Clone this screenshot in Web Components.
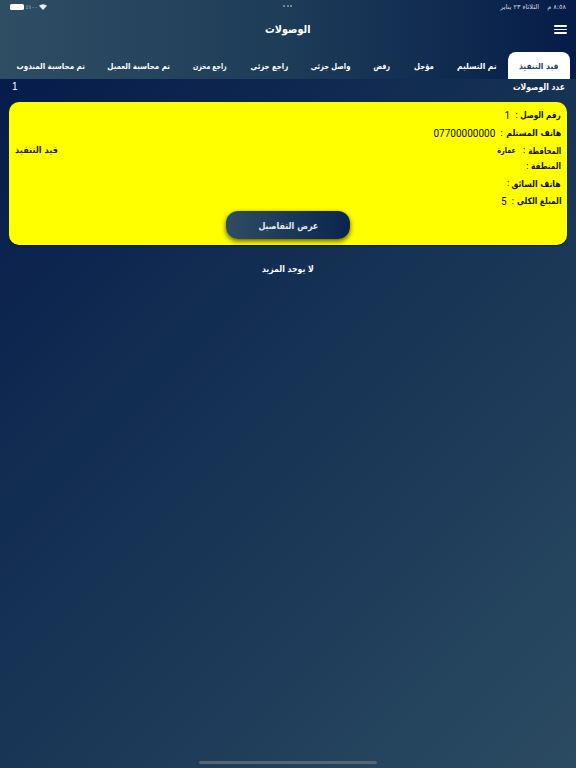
<!DOCTYPE html>
<html lang="ar" dir="rtl"><head><meta charset="utf-8">
<style>
html,body{margin:0;padding:0;height:100%}
body{width:576px;height:768px;overflow:hidden;font-family:"DejaVu Sans",sans-serif;background:linear-gradient(135deg,#04194a 0%,#183555 55%,#2b4b62 100%);color:#fff}
</style></head><body>
<app-header title="الوصولات"></app-header>
<tab-bar active="قيد التنفيذ" items="قيد التنفيذ:.91|تم التسليم:.91|مؤجل:.83|رفض:.77|واصل جزئي:.81|راجع جزئي:.84|راجع مخزن:.74|تم محاسبة العميل:.855|تم محاسبة المندوب:.86"></tab-bar>
<count-row label="عدد الوصولات" value="1"></count-row>
<receipt-card>
  <receipt-line slot="lines" label="رقم الوصل" value="1" gap="0" fit=".83"></receipt-line>
  <receipt-line slot="lines" label="هاتف المستلم" value="07700000000" gap="3" fit=".895"></receipt-line>
  <receipt-line slot="lines" label="المحافظة" value="عمارة" word gap="2.5" fit=".79"></receipt-line>
  <receipt-line slot="lines" label="المنطقة" value="" gap="0.5" fit=".83"></receipt-line>
  <receipt-line slot="lines" label="هاتف السائق" value="" gap="2.5" fit=".875"></receipt-line>
  <receipt-line slot="lines" label="المبلغ الكلي" value="5" gap="2.5" fit=".85"></receipt-line>
  <fit-text slot="status" scale=".91">قيد التنفيذ</fit-text>
  <fit-text slot="action" scale=".87">عرض التفاصيل</fit-text>
</receipt-card>
<end-note><fit-text scale=".9">لا يوجد المزيد</fit-text></end-note>
<home-indicator></home-indicator>
<script>
function def(name,css,html,init){customElements.define(name,class extends HTMLElement{connectedCallback(){if(this.shadowRoot)return;const r=this.attachShadow({mode:'open'});r.innerHTML='<style>'+css+'</style>'+(typeof html==='function'?html(this):html);if(init)init(this);}});}
const band='linear-gradient(90deg,#2f4d63 0%,#1d3c58 50%,#051c48 100%)';
def('app-header',`
:host{display:block;height:52px;background:${band};box-sizing:border-box}
.st{display:flex;justify-content:space-between;align-items:center;height:13px;padding:0 10px;font-size:6.5px;color:#d5dce4;position:relative}
.l{display:flex;align-items:center;gap:1.5px}
.pct{font-size:5.5px}
.dots{position:absolute;left:283px;top:5px;display:flex;gap:1.5px}
.dots i{width:2px;height:2px;border-radius:50%;background:#8a9bb0}
.bar{display:flex;align-items:center;justify-content:center;height:33px;position:relative}
h1{margin:0;font-size:11px;font-weight:700;color:#fff;line-height:1}
.menu{position:absolute;right:9.5px;top:12px;width:13px;height:9px;display:flex;flex-direction:column;justify-content:space-between}
.menu i{display:block;height:1.7px;background:#fff;border-radius:1px}
`,h=>`<div class="st"><span>٨:٥٨ م &nbsp;&nbsp; الثلاثاء ٢٣ يناير</span>
<span class="dots"><i></i><i></i><i></i></span>
<span class="l" dir="ltr"><svg width="14" height="6" viewBox="0 0 14 6"><rect width="14" height="6" rx="1.6" fill="#fff"/></svg><span class="pct">٪١٠٠</span><svg width="8" height="6" viewBox="0 0 8 6"><path d="M4 6 L0 1.8 A5.8 5.8 0 0 1 8 1.8Z" fill="#e8edf2"/></svg></span></div>
<div class="bar"><h1><fit-text scale=".88">${h.getAttribute('title')}</fit-text></h1><div class="menu"><i></i><i></i><i></i></div></div>`);
def('tab-bar',`
:host{display:block;height:27px;background:${band}}
.r{display:flex;height:27px;padding:0 6px;box-sizing:border-box;white-space:nowrap}
.t{padding:0 11.5px;display:flex;align-items:center;font-size:8.3px;font-weight:700;color:#fff}
.t.a{background:#fff;color:#27425c;border-radius:8px 8px 0 0}
`,h=>{const a=h.getAttribute('active');return '<div class="r">'+h.getAttribute('items').split('|').map(x=>{const [t,s]=x.split(':');return `<div class="t${t===a?' a':''}"><fit-text scale="${s}">${t}</fit-text></div>`}).join('')+'</div>'});
def('count-row',`
:host{display:flex;justify-content:space-between;align-items:center;height:15px;padding:0 11px 0 12px;font-size:8.8px;font-weight:700;color:#fff}
.v{font-family:"Liberation Sans",sans-serif;font-size:10px;font-weight:400}
`,h=>`<fit-text scale=".87">${h.getAttribute('label')}</fit-text><span class="v">${h.getAttribute('value')}</span>`);
def('receipt-card',`
:host{display:block;position:relative;margin:8px 9px 0;height:142.5px;box-sizing:border-box;background:#ff0;border-radius:10px;padding:5.5px 6px 0 6px;color:#000;box-shadow:0 1px 1px rgba(0,0,0,.6)}
.lines{display:flex;flex-direction:column}
.st{position:absolute;left:6px;top:42px;font-size:9px;font-weight:700;color:#222}
.btn{position:absolute;left:217px;top:109px;width:124px;height:28px;border-radius:12px;background:linear-gradient(90deg,#2f4d63,#0a2450);color:#e3eaf0;display:flex;align-items:center;justify-content:center;font-size:9.2px;font-weight:700;box-shadow:0 2px 5px rgba(0,0,0,.65)}
`,`<div class="lines"><slot name="lines"></slot></div><div class="st"><slot name="status"></slot></div><div class="btn"><slot name="action"></slot></div>`);
def('receipt-line',`
:host{display:flex;align-items:center;height:15px;font-size:8.8px;font-weight:700;color:#111;white-space:nowrap}
.c{margin:0 2.5px;font-size:8px;font-weight:400}
.v{font-family:"Roboto","Liberation Sans",sans-serif;font-weight:400;font-size:10px;margin-right:2.5px}
.w{font-family:"DejaVu Sans",sans-serif;font-weight:700;font-size:8px;margin-right:4px}
`,h=>`<fit-text scale="${h.getAttribute('fit')}">${h.getAttribute('label')}</fit-text><span class="c">:</span><span class="v${h.hasAttribute('word')?' w':''}">${h.hasAttribute('word')?`<fit-text scale=".8">${h.getAttribute('value')}</fit-text>`:h.getAttribute('value')}</span>`,h=>{h.style.marginTop=h.getAttribute('gap')+'px'});
def('end-note',`:host{display:block;text-align:center;margin-top:19px;font-size:8.6px;font-weight:700;color:#fff}`,'<slot></slot>');
def('home-indicator',`:host{display:block;position:absolute;left:199px;top:761px;width:178px;height:3px;background:#566473;border-radius:2px}`,'');
def('fit-text',`
:host{display:inline-flex;justify-content:center;vertical-align:middle}
span{display:inline-block;flex:none;white-space:nowrap;transform-origin:center}
`,'<span><slot></slot></span>',h=>{const s=parseFloat(h.getAttribute('scale'))||1,i=h.shadowRoot.querySelector('span');i.style.transform='scaleX('+s+')';h.style.width=(i.offsetWidth*s)+'px'});
</script>
</body></html>
